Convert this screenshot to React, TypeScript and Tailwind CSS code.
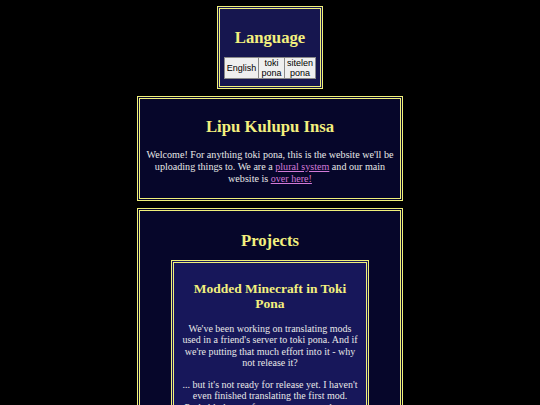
import React from "react";

export default function App() {
  return (
    <div className="min-h-screen bg-black flex flex-col items-center pt-[6px] gap-[7px] overflow-hidden" style={{ fontFamily: '"Liberation Serif", "Times New Roman", serif' }}>
      <div className="w-[106px] h-[83px] border-[3px] border-double border-[#f0f07a] bg-[#16164f] flex flex-col items-center">
        <h2 className="text-[16.7px] font-bold text-[#f3f07e] leading-none mt-[21px]">Language</h2>
        <div className="flex mt-[10px]" style={{ fontFamily: '"Liberation Sans", Arial, sans-serif' }}>
          <button className="w-[35px] h-[22px] bg-[#efefef] border border-[#8a8a8a] text-[9px] leading-[10px] text-black">English</button>
          <button className="w-[26px] h-[22px] bg-[#efefef] border border-l-0 border-[#8a8a8a] text-[9px] leading-[10px] text-black">toki<br />pona</button>
          <button className="w-[31px] h-[22px] bg-[#efefef] border border-l-0 border-[#8a8a8a] text-[9px] leading-[10px] text-black">sitelen<br />pona</button>
        </div>
      </div>

      <div className="w-[266px] h-[105px] border-[3px] border-double border-[#f0f07a] bg-[#06062a] flex flex-col items-center px-[3px]">
        <h1 className="text-[16.7px] font-bold text-[#f3f07e] leading-none mt-[20px]">Lipu Kulupu Insa</h1>
        <p className="text-[10.1px] leading-[12px] text-[#e8e8e8] text-center mt-[13px]">
          Welcome! For anything toki pona, this is the website we'll be uploading things to. We are a{" "}
          <a className="underline text-[#d27ad8]">plural system</a> and our main website is{" "}
          <a className="underline text-[#d27ad8]">over here!</a>
        </p>
      </div>

      <div className="w-[266px] shrink-0 border-[3px] border-double border-[#f0f07a] bg-[#06062a] flex flex-col items-center pb-[20px]">
        <h1 className="text-[16.7px] font-bold text-[#f3f07e] leading-none mt-[22px]">Projects</h1>
        <div className="w-[198px] mt-[10px] border-[3px] border-double border-[#f0f07a] bg-[#17175a] flex flex-col items-center px-[6px] pb-[20px]">
          <h3 className="text-[13.5px] font-bold text-[#f3f07e] leading-[15px] text-center mt-[18px]">Modded Minecraft in Toki Pona</h3>
          <p className="text-[10px] leading-[11.5px] text-[#e8e8e8] text-center mt-[12px]">
            We've been working on translating mods used in a friend's server to toki pona. And if we're putting that much effort into it - why not release it?
          </p>
          <p className="text-[10px] leading-[11.5px] text-[#e8e8e8] text-center mt-[10px]">
            ... but it's not ready for release yet. I haven't even finished translating the first mod. Probably have a few more to go, and some to check over, too.
          </p>
        </div>
      </div>
    </div>
  );
}
